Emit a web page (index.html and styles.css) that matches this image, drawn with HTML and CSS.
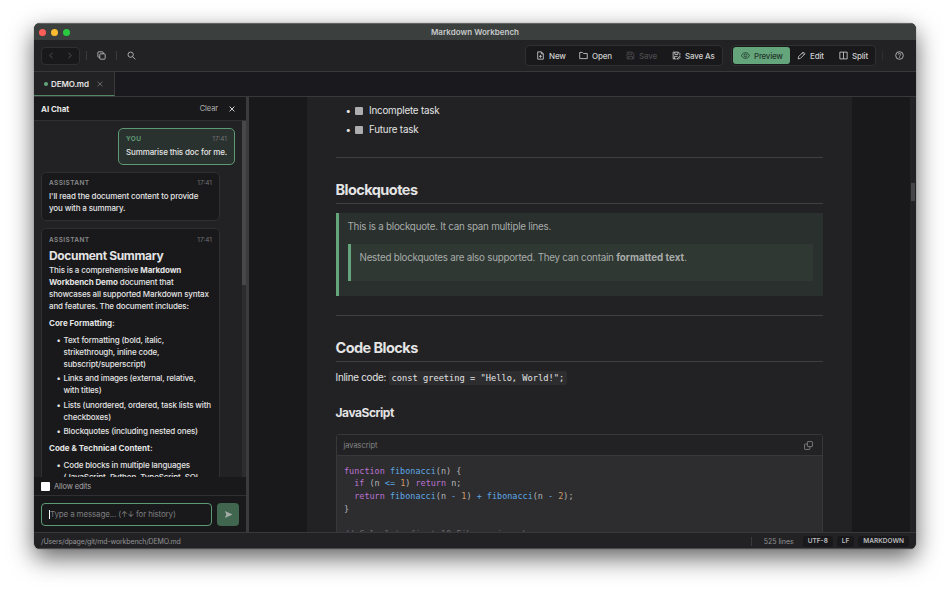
FILE: index.html
```html
<!DOCTYPE html>
<html lang="en">

<head>
    <meta charset="UTF-8">
    <title>Markdown Workbench</title>
    <link rel="stylesheet" href="styles.css">
</head>

<body>
    <div class="window">
        <header class="titlebar">
            <div class="lights">
                <span class="light red"></span>
                <span class="light yellow"></span>
                <span class="light green"></span>
            </div>
            <span class="title">Markdown Workbench</span>
        </header>

        <nav class="toolbar">
            <div class="history">
                <svg class="icon" viewBox="0 0 16 16"><path d="M10 3 5 8l5 5"/></svg>
                <svg class="icon" viewBox="0 0 16 16"><path d="m6 3 5 5-5 5"/></svg>
            </div>
            <span class="sep"></span>
            <svg class="icon tool" viewBox="0 0 16 16"><rect x="5" y="5" width="9.5" height="9.5" rx="1"/><path d="M5 11H2.5a1 1 0 0 1-1-1V2.5a1 1 0 0 1 1-1H10a1 1 0 0 1 1 1V5"/></svg>
            <span class="sep"></span>
            <svg class="icon tool" viewBox="0 0 16 16"><circle cx="6.5" cy="6.5" r="4.7"/><path d="m10 10 4.8 4.8"/></svg>
            <span class="spacer"></span>
            <div class="group files">
                <button type="button" class="btn new"><svg class="icon" viewBox="0 0 16 16"><path d="M9.5 1.5H3v13h10V5zM9.5 1.5V5H13M8 7v5M5.5 9.5h5"/></svg>New</button>
                <button type="button" class="btn open"><svg class="icon" viewBox="0 0 16 16"><path d="M1.3 13.5v-11H6l2 2h6.7v9z"/></svg>Open</button>
                <button type="button" class="btn save off"><svg class="icon" viewBox="0 0 16 16"><path d="M2 2h9.5L14 4.5V14H2zM5 2v4h5.5V2M4.5 14V9.5h7V14"/></svg>Save</button>
                <button type="button" class="btn saveas"><svg class="icon" viewBox="0 0 16 16"><path d="M14 8V4.5L11.5 2H2v12h6M5 2v4h5.5V2M4.5 14V9.5H10M9.5 14.5l.5-2 3.5-3 1.5 1.5-3.5 3z"/></svg>Save As</button>
            </div>
            <div class="group views">
                <button type="button" class="btn preview active"><svg class="icon" viewBox="0 0 16 16"><path d="M.8 8C2.5 4.5 5 3 8 3s5.5 1.5 7.2 5C13.5 11.5 11 13 8 13S2.5 11.5.8 8z"/><circle cx="8" cy="8" r="2.5"/></svg>Preview</button>
                <button type="button" class="btn edit"><svg class="icon" viewBox="0 0 16 16"><path d="m2 14 .8-4L11 1.8 14.2 5 6 13.2zM9.5 3.5l3 3"/></svg>Edit</button>
                <button type="button" class="btn split"><svg class="icon" viewBox="0 0 16 16"><path d="M1.5 2h13v12h-13zM8 2v12"/></svg>Split</button>
            </div>
            <span class="sep faint"></span>
            <svg class="icon help" viewBox="0 0 16 16"><circle cx="8" cy="8" r="6.8"/><path d="M5.8 6.3a2.2 2.2 0 1 1 3.2 2c-.7.4-1 .7-1 1.4M8 11.2v1.3"/></svg>
        </nav>

        <div class="tabs">
            <div class="tab">
                <span class="dot"></span>
                <span class="tab-name">DEMO.md</span>
                <svg class="icon x" viewBox="0 0 10 10"><path d="m2 2 6 6M8 2 2 8"/></svg>
            </div>
        </div>

        <div class="workspace">
            <aside class="chat">
                <div class="chat-head">
                    <span class="chat-title">AI Chat</span>
                    <span class="clear">Clear</span>
                    <svg class="icon x" viewBox="0 0 10 10"><path d="m2 2 6 6M8 2 2 8"/></svg>
                </div>
                <div class="log">
                    <div class="messages">
                        <div class="msg user">
                            <div class="meta"><span class="who">YOU</span><span class="time">17:41</span></div>
                            <p>Summarise this doc for me.</p>
                        </div>
                        <div class="msg">
                            <div class="meta"><span class="who">ASSISTANT</span><span class="time">17:41</span></div>
                            <p>I'll read the document content to provide<br>you with a summary.</p>
                        </div>
                        <div class="msg long">
                            <div class="meta"><span class="who">ASSISTANT</span><span class="time">17:41</span></div>
                            <h2>Document Summary</h2>
                            <p>This is a comprehensive <b>Markdown<br>Workbench Demo</b> document that<br>showcases all supported Markdown syntax<br>and features. The document includes:</p>
                            <h3>Core Formatting:</h3>
                            <ul>
                                <li>Text formatting (bold, italic,<br>strikethrough, inline code,<br>subscript/superscript)</li>
                                <li>Links and images (external, relative,<br>with titles)</li>
                                <li>Lists (unordered, ordered, task lists with<br>checkboxes)</li>
                                <li>Blockquotes (including nested ones)</li>
                            </ul>
                            <h3>Code &amp; Technical Content:</h3>
                            <ul>
                                <li>Code blocks in multiple languages<br>(JavaScript, Python, TypeScript, SQL,</li>
                            </ul>
                        </div>
                    </div>
                    <div class="log-bar"><div class="log-thumb"></div></div>
                </div>
                <label class="allow"><span class="box"></span>Allow edits</label>
                <div class="composer">
                    <div class="field"><span class="caret"></span><span class="hint">Type a message... (↑↓ for history)</span></div>
                    <button type="button" class="send"><svg viewBox="0 0 10 10"><path d="M1 1.2 9.5 5 1 8.8 2.6 5z"/></svg></button>
                </div>
            </aside>
            <div class="handle"></div>

            <main class="viewer">
                <article class="doc">
                    <ul class="tasks">
                        <li><span class="check"></span>Incomplete task</li>
                        <li><span class="check"></span>Future task</li>
                    </ul>
                    <hr>
                    <h2>Blockquotes</h2>
                    <blockquote>
                        <p>This is a blockquote. It can span multiple lines.</p>
                        <blockquote class="nested">
                            <p>Nested blockquotes are also supported. They can contain <b>formatted text</b>.</p>
                        </blockquote>
                    </blockquote>
                    <hr>
                    <h2>Code Blocks</h2>
                    <p class="inline">Inline code: <code>const greeting = "Hello, World!";</code></p>
                    <h3>JavaScript</h3>
                    <div class="code">
                        <div class="code-head">
                            <span>javascript</span>
                            <svg class="icon" viewBox="0 0 16 16"><rect x="6" y="1" width="9" height="9" rx="1"/><path d="M6 5.5H2a1 1 0 0 0-1 1V14a1 1 0 0 0 1 1h7.5a1 1 0 0 0 1-1v-4"/></svg>
                        </div>
<pre><span class="k">function</span> <span class="f">fibonacci</span>(n) {
  <span class="k">if</span> (n <span class="f">&lt;=</span> <span class="n">1</span>) <span class="k">return</span> n;
  <span class="k">return</span> <span class="f">fibonacci</span>(n <span class="f">-</span> <span class="n">1</span>) <span class="f">+</span> <span class="f">fibonacci</span>(n <span class="f">-</span> <span class="n">2</span>);
}

<span class="c">// Calculate first 10 Fibonacci numbers</span></pre>
                    </div>
                </article>
                <div class="view-bar"><div class="view-thumb"></div></div>
            </main>
        </div>

        <footer class="status">
            <span class="path">/Users/dpage/git/md-workbench/DEMO.md</span>
            <span class="sep"></span>
            <span class="lines">525 lines</span>
            <span class="chip">UTF-8</span>
            <span class="chip">LF</span>
            <span class="chip">MARKDOWN</span>
        </footer>
    </div>
</body>

</html>
```
FILE: styles.css
```css
* {
    box-sizing: border-box;
}

body {
    margin: 0;
    padding: 23px 34px 45px;
    height: 594px;
    background: #fff;
    font-family: Inter, sans-serif;
    color: #e4e4e4;
    overflow: hidden;
}

h2, h3, p, ul, pre, blockquote {
    margin: 0;
    padding: 0;
}

button {
    font-family: inherit;
    border: none;
    padding: 0;
}

.icon {
    width: 9px;
    height: 9px;
    flex: none;
    fill: none;
    stroke: currentColor;
    stroke-width: 1.5;
}

.window {
    width: 882px;
    height: 526px;
    display: flex;
    flex-direction: column;
    background: #222224;
    border-radius: 6px;
    overflow: hidden;
    box-shadow: 0 0 1px rgba(0, 0, 0, .6), 0 9px 25px rgba(0, 0, 0, .62);
}

/* title bar */
.titlebar {
    height: 17px;
    flex: none;
    display: grid;
    grid-template-columns: 100px 1fr 100px;
    align-items: center;
    background: #3b403f;
    border-top: 1px solid #606463;
}

.lights {
    display: flex;
    gap: 5px;
    padding-left: 5px;
}

.light {
    width: 7px;
    height: 7px;
    border-radius: 50%;
}

.red { background: #ff5f58; }
.yellow { background: #fdbc2f; }
.green { background: #29c941; }

.title {
    text-align: center;
    font-size: 8px;
    font-weight: 600;
    line-height: 10px;
    letter-spacing: .02px;
    padding-bottom: 1px;
    color: #c8caca;
}

/* toolbar */
.toolbar {
    height: 32px;
    flex: none;
    display: flex;
    align-items: center;
    padding: 0 12px 0 7px;
    border-bottom: 1px solid #38383a;
    color: #c4c4c4;
}

.history {
    width: 39px;
    height: 18px;
    display: flex;
    align-items: center;
    justify-content: space-between;
    padding: 0 5px;
    background: #19191b;
    border: 1px solid #303032;
    border-radius: 4px;
    color: #5c5c5e;
}

.sep {
    width: 1px;
    height: 9px;
    background: #3a3a3c;
    margin: 0 0 0 6px;
}

.sep + .tool {
    margin-left: 10px;
}

.tool + .sep {
    margin-left: 10px;
}

.spacer {
    flex: 1;
}

.group {
    height: 21px;
    display: flex;
    align-items: center;
    background: #19191b;
    border: 1px solid #303032;
    border-radius: 4px;
}

.files {
    width: 198px;
    margin-right: 8px;
    padding-left: 2px;
}

.views {
    width: 145px;
    padding-left: 1px;
}

.btn {
    height: 17px;
    display: flex;
    align-items: center;
    gap: 4px;
    padding-left: 8px;
    background: none;
    border-radius: 3px;
    font-size: 8px;
    font-weight: 500;
    letter-spacing: -.17px;
    color: #cdcdcd;
}

.new { width: 43px; }
.open { width: 47px; }
.save { width: 46px; }
.saveas { width: 58px; }
.preview { width: 57px; }
.edit { width: 41px; }
.split { width: 43px; }

.edit {
    padding-left: 7px;
}

.off {
    color: #4b4b4d;
}

.active {
    background: #64a57c;
    color: #24382b;
    letter-spacing: -.25px;
}

.faint {
    margin-left: 6px;
    background: #303032;
}

.help {
    margin-left: 12px;
}

/* tabs */
.tabs {
    height: 25px;
    flex: none;
    display: flex;
    background: #1a1a1e;
    border-bottom: 1px solid #38383a;
}

.tab {
    width: 81px;
    height: 24px;
    display: flex;
    align-items: center;
    padding-left: 10px;
    background: #222224;
    border-right: 1px solid #3a3a3c;
    border-bottom: 1px solid #548567;
}

.dot {
    width: 4px;
    height: 4px;
    border-radius: 50%;
    background: #64a57c;
    margin-right: 3px;
}

.tab-name {
    width: 45px;
    font-size: 8px;
    font-weight: 600;
    letter-spacing: -.1px;
}

.x {
    width: 8px;
    height: 8px;
    stroke-width: 1;
    color: #77777a;
}

/* chat */
.workspace {
    height: 435px;
    flex: none;
    display: flex;
}

.chat {
    width: 212px;
    display: flex;
    flex-direction: column;
    background: #19191b;
}

.chat-head {
    height: 24px;
    flex: none;
    display: flex;
    align-items: center;
    padding: 0 10px 0 7px;
    border-bottom: 1px solid #303032;
}

.chat-title {
    flex: 1;
    font-size: 8px;
    font-weight: 700;
    letter-spacing: -.05px;
}

.clear {
    font-size: 7.5px;
    letter-spacing: -.1px;
    color: #b2b2b2;
    margin-right: 10px;
}

.chat-head .x {
    color: #dcdcdc;
    stroke-width: 1.2;
}

.log {
    height: 356px;
    flex: none;
    display: flex;
    background: #222224;
    overflow: hidden;
}

.messages {
    width: 208px;
    display: flex;
    flex-direction: column;
    gap: 7px;
    padding: 7px 7px 0;
}

.log-bar {
    width: 4px;
    background: #2c2c2e;
}

.log-thumb {
    height: 164px;
    background: #48484a;
}

.msg {
    width: 179px;
    flex: none;
    padding: 5px 7px 6px;
    background: #19191b;
    border: 1px solid #303032;
    border-radius: 5px;
    font-size: 8px;
    font-weight: 500;
    line-height: 12px;
    letter-spacing: -.14px;
    white-space: nowrap;
}

.msg b {
    font-weight: 700;
    letter-spacing: -.08px;
}

.user {
    width: 117px;
    align-self: flex-end;
    background: #2a322f;
    border-color: #5c9a74;
}

.user .who {
    color: #64a57c;
}

.long {
    padding-top: 6px;
}

.meta {
    height: 9px;
    display: flex;
    justify-content: space-between;
    align-items: center;
    margin-bottom: 3px;
    font-size: 6.5px;
    color: #8b8b8b;
}

.who {
    font-weight: 600;
    letter-spacing: .4px;
}

.time {
    font-weight: 400;
    letter-spacing: 0;
    color: #707072;
}

.msg h2 {
    font-size: 12px;
    font-weight: 700;
    line-height: 16px;
    letter-spacing: -.35px;
    margin-top: 4px;
}

.msg h3 {
    font-size: 8px;
    font-weight: 700;
    line-height: 12px;
    letter-spacing: 0;
    margin: 5px 0;
}

.msg ul {
    list-style: none;
    padding-left: 14.5px;
}

.msg li {
    margin-bottom: 2.4px;
}

.msg li::before {
    content: "•";
    float: left;
    width: 7px;
    margin-left: -7px;
}

.allow {
    height: 18px;
    flex: none;
    display: flex;
    align-items: center;
    gap: 4px;
    padding-left: 7px;
    font-size: 7.5px;
    letter-spacing: -.13px;
    color: #a5a5a7;
}

.box {
    width: 9px;
    height: 9px;
    background: #fff;
    border-radius: 1px;
}

.composer {
    height: 37px;
    display: flex;
    align-items: center;
    gap: 5px;
    padding: 0 7px;
    border-top: 1px solid #303032;
}

.field {
    width: 171px;
    height: 23px;
    display: flex;
    align-items: center;
    padding-left: 7px;
    border: 1px solid #5c9a74;
    border-radius: 4px;
    font-size: 8px;
    letter-spacing: -.16px;
    color: #7d7d7f;
}

.caret {
    width: 1px;
    height: 9px;
    background: #fff;
}

.send {
    width: 22px;
    height: 23px;
    display: flex;
    align-items: center;
    justify-content: center;
    background: #416650;
    border-radius: 4px;
}

.send svg {
    width: 9px;
    height: 9px;
    fill: #a3ada6;
}

.handle {
    width: 3px;
    background: #3b3b3d;
}

/* document */
.viewer {
    flex: 1;
    display: flex;
    justify-content: space-between;
    padding-left: 58px;
    background: #19191b;
    overflow: hidden;
}

.doc {
    width: 545px;
    height: 435px;
    padding: 4px 29px 0 28.5px;
    background: #222224;
    font-size: 9.8px;
    letter-spacing: -.24px;
    overflow: hidden;
}

.view-bar {
    width: 6px;
    padding: 86px 1px 0;
    background: #222224;
}

.view-thumb {
    height: 18px;
    background: #454547;
}

.tasks {
    list-style: none;
    padding-left: 10px;
}

.tasks li {
    height: 19px;
    display: flex;
    align-items: center;
    letter-spacing: -.2px;
}

.tasks li::before {
    content: "•";
    width: 9px;
}

.check {
    width: 8px;
    height: 8px;
    margin-right: 6.5px;
    background: #adadad;
    border-radius: 1px;
}

.doc hr {
    height: 1px;
    margin: 18px 0 25px;
    border: none;
    background: #3f3f41;
}

.doc h2 {
    height: 21px;
    margin-bottom: 9px;
    border-bottom: 1px solid #3f3f41;
    font-size: 14.5px;
    font-weight: 700;
    line-height: 14px;
    letter-spacing: -.55px;
}

blockquote {
    height: 83px;
    padding: 6px 10px 0 9px;
    background: #2a302e;
    border-left: 3px solid #64a57c;
    line-height: 16px;
    color: #a9acaa;
}

blockquote b {
    letter-spacing: 0;
}

.nested {
    height: 37px;
    margin-top: 9px;
    background: #2f3833;
}

.doc blockquote + hr {
    margin-top: 19px;
}

.inline {
    line-height: 14px;
}

.inline code {
    padding: 2px 3px;
    background: #2d2d2f;
    border-radius: 2px;
    font-family: "DejaVu Sans Mono", monospace;
    font-size: 8.7px;
    letter-spacing: 0;
}

.doc h3 {
    margin: 20px 0 13px;
    font-size: 12px;
    font-weight: 700;
    line-height: 16px;
    letter-spacing: -.45px;
}

.code {
    height: 130px;
    background: #2d2d2f;
    border: 1px solid #38383a;
    border-radius: 3px;
}

.code-head {
    height: 21px;
    display: flex;
    align-items: center;
    justify-content: space-between;
    padding: 0 9px 0 7px;
    background: #222224;
    border-bottom: 1px solid #38383a;
    font-size: 7.5px;
    letter-spacing: -.05px;
    color: #858587;
}

pre {
    padding: 8.5px 7.5px 0;
    font-family: "DejaVu Sans Mono", monospace;
    font-size: 8.48px;
    line-height: 12.75px;
    letter-spacing: 0;
    color: #b4b6ba;
}

.k { color: #bd73d2; }
.f { color: #5fa8e6; }
.n { color: #cf9765; }
.c { color: #68686b; }

/* status bar */
.status {
    height: 17px;
    flex: none;
    display: flex;
    align-items: center;
    padding: 1px 7px 0;
    border-top: 1px solid #38383a;
    border-bottom: 1px solid #4a4a4c;
    font-size: 7px;
    letter-spacing: -.14px;
    color: #929294;
}

.path {
    flex: 1;
}

.status .sep {
    margin-right: 12px;
}

.lines {
    margin-right: 5px;
    letter-spacing: 0;
}

.chip {
    height: 11px;
    padding: 0 5px;
    margin-left: 4px;
    background: #19191b;
    border-radius: 3px;
    font-size: 6.5px;
    font-weight: 600;
    line-height: 11px;
    letter-spacing: 0;
    color: #bcbcbe;
}
```
